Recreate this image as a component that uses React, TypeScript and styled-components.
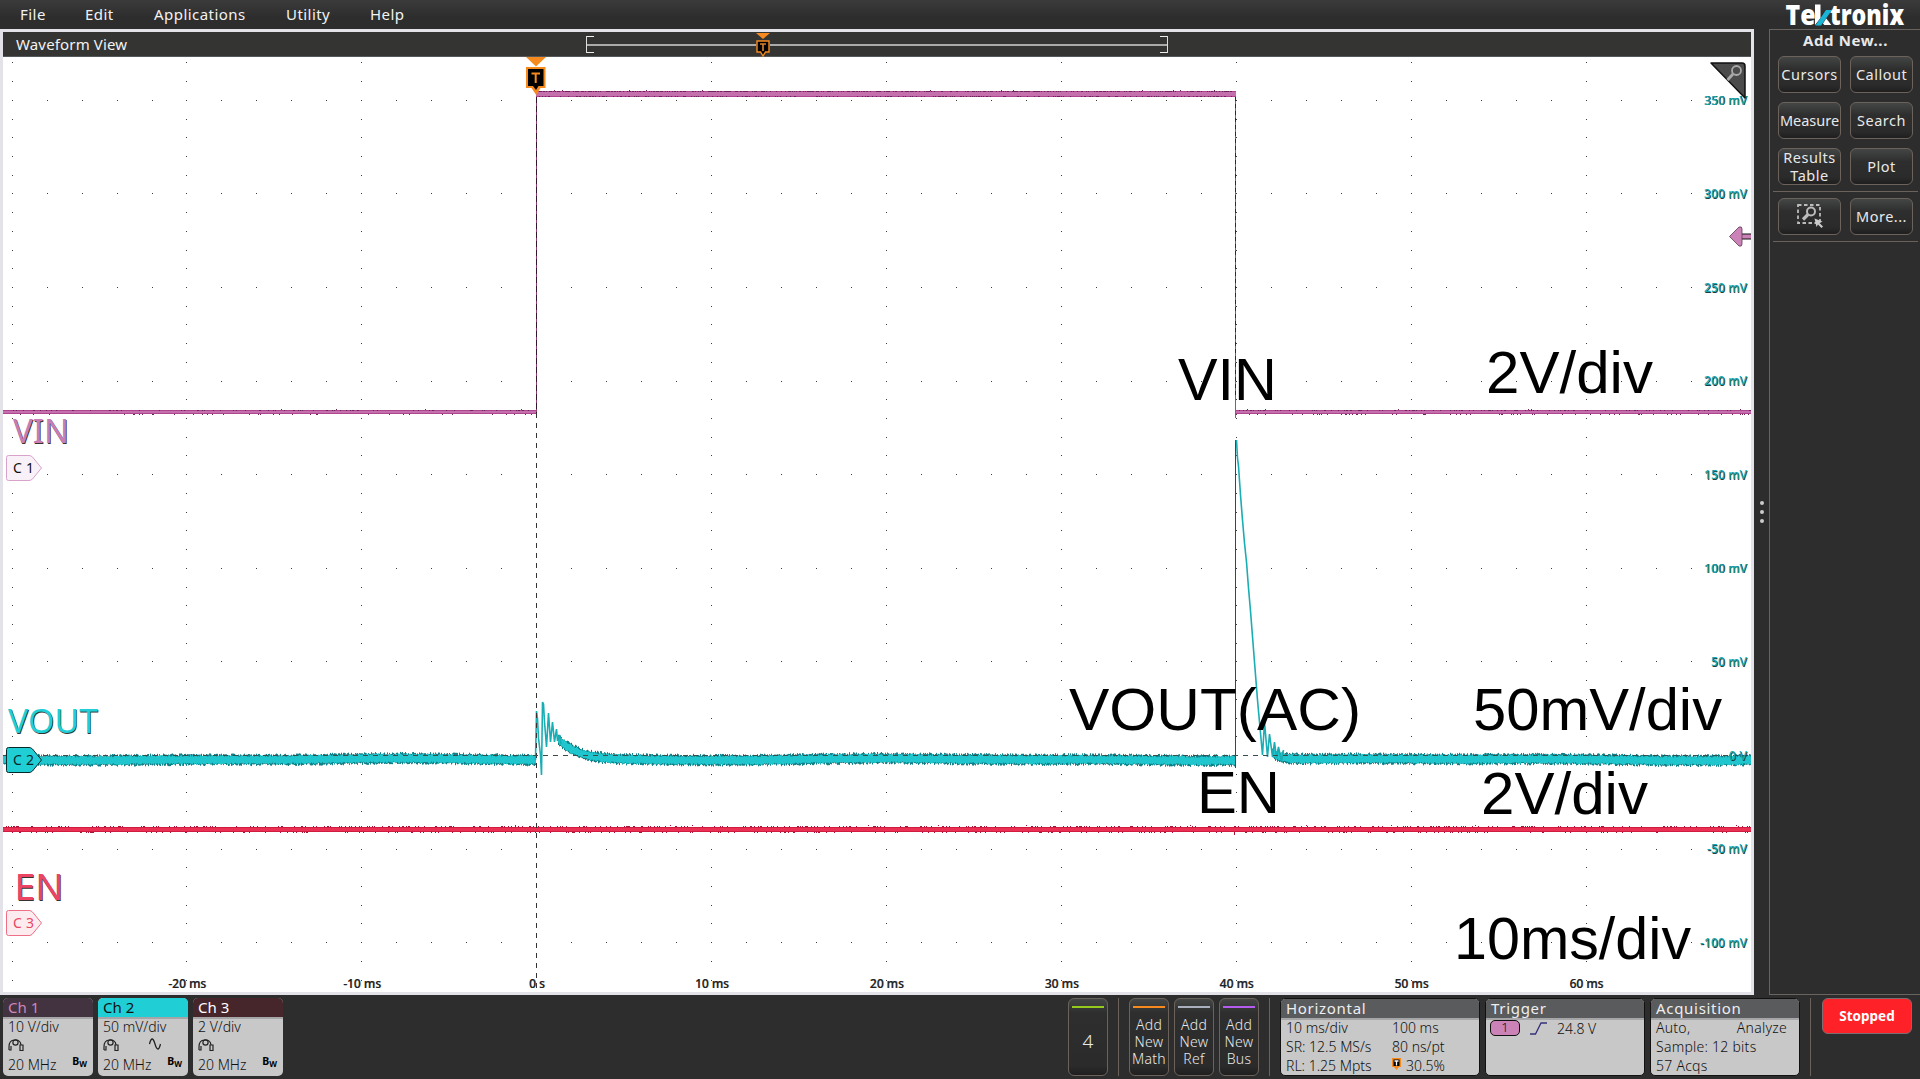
import type { ReactNode } from "react";
import styled, { createGlobalStyle } from "styled-components";

const UI_FONT = `"Noto Sans", "Open Sans", sans-serif`;

// small deterministic noise source, keeps the traces stable between renders
const createNoise = (seed: number) => () => {
  seed = (seed * 1664525 + 1013904223) % 4294967296;
  return seed / 4294967296;
};

const ORIGIN_X = 536.3;
const ORIGIN_Y = 755;
const DIV_X = 174.9;
const DIV_Y = 93.6;
const PLOT_LEFT = 3;
const PLOT_RIGHT = 1751;

const gridDots = () => {
  let d = "";
  for (let col = -3; col <= 6; col++) {
    if (col === 0) continue;
    const x = Math.round(ORIGIN_X + col * DIV_X);
    for (let k = -37; k <= 12; k++) {
      const y = Math.round(ORIGIN_Y + (k * DIV_Y) / 5);
      if (k !== 0) d += `M${x} ${y}h1v1h-1z`;
    }
  }
  for (let row = -7; row <= 2; row++) {
    if (row === 0) continue;
    const y = Math.round(ORIGIN_Y + row * DIV_Y);
    for (let k = -15; k <= 33; k++) {
      if (k % 5 === 0) continue;
      d += `M${Math.round(ORIGIN_X + (k * DIV_X) / 5)} ${y}h1v1h-1z`;
    }
  }
  return d;
};

const specks = (from: number, to: number, top: number, bottom: number, seed: number, density: number) => {
  const rand = createNoise(seed);
  let d = "";
  for (let x = from; x < to; x++) {
    if (rand() < density) d += `M${x} ${top}h1v1h-1z`;
    if (rand() < density * 0.6) d += `M${x} ${bottom}h1v1h-1z`;
    if (rand() < density * 0.04) d += `M${x} ${top - 1}h1v1h-1z`;
  }
  return d;
};

const center = (x: number) => {
  const wave = Math.sin(x / 83) * 0.8 + Math.sin(x / 37) * 0.4;
  let base = 759.5 + wave;
  if (x > 556 && x < 680) base -= 23 * Math.exp(-(x - 556) / 20);
  if (x > 1268 && x < 1320) base -= 10 * Math.exp(-(x - 1268) / 10);
  return base;
};

const band = (from: number, to: number, half: number, jitter: number, seed: number) => {
  const rand = createNoise(seed);
  let d = "";
  for (let x = from; x < to; x++) {
    const y = center(x);
    const top = y - half - rand() * jitter;
    const bottom = y + half + rand() * jitter;
    d += `M${x + 0.5} ${top.toFixed(1)}V${bottom.toFixed(1)}`;
  }
  return d;
};

const RING_START =
  "M535.5 760L536.5 711L537.5 719L538.5 738L540.5 755L541.5 775L542.5 702L543.5 704L544.5 722L546.5 747L548.5 713L550.5 742L552.5 722L554.5 742L556.5 729L557.5 741L559.5 735L561 744";
const RING_END =
  "M1236.5 440L1237.5 458L1238.5 466L1240.5 495L1242.5 520L1244.5 543L1246.5 562L1248.5 588L1250.5 611L1254.5 662L1257.500 700L1260.500 733L1262.500 755L1264.500 722L1267.500 757L1269.500 734L1272.500 757L1274.500 742L1276.500 758L1278.500 747L1281.500 761L1283.500 750";

const VOLT_LABELS = ["350 mV", "300 mV", "250 mV", "200 mV", "150 mV", "100 mV", "50 mV", "0 V", "-50 mV", "-100 mV"];
const VOLT_WIDTHS = [43, 43, 43, 43, 43, 43, 36, 18, 40, 47];
const TIME_LABELS = ["-20 ms", "-10 ms", "0 s", "10 ms", "20 ms", "30 ms", "40 ms", "50 ms", "60 ms"];

const NOTES = [
  { text: "VIN", x: 1178, y: 399.5, width: 99 },
  { text: "2V/div", x: 1486, y: 393, width: 167 },
  { text: "VOUT(AC)", x: 1069, y: 730, width: 292 },
  { text: "50mV/div", x: 1473, y: 730, width: 249 },
  { text: "EN", x: 1197, y: 813, width: 83 },
  { text: "2V/div", x: 1481, y: 813.5, width: 167 },
  { text: "10ms/div", x: 1454, y: 959, width: 237 },
];

const CHANNEL_NAMES = [
  { text: "VIN", x: 13, y: 443, size: 33, width: 56, color: "#c77eb4" },
  { text: "VOUT", x: 8, y: 733, size: 33, width: 90, color: "#20cfd6" },
  { text: "EN", x: 14.5, y: 899.5, size: 36, width: 49, color: "#ec4463" },
];

const TAGS = [
  { label: "C 1", y: 455.5, fill: "#f8f1f7", stroke: "#d9a2cb", text: "#111" },
  { label: "C 2", y: 747.5, fill: "#20cfd6", stroke: "#06282a", text: "#06282a" },
  { label: "C 3", y: 910.5, fill: "#fdecef", stroke: "#ee6f86", text: "#ec4463" },
];

function Plot() {
  return (
    <PlotSvg viewBox="3 57 1748 935">
      <path d={gridDots()} fill="#3c3c3c" shapeRendering="crispEdges" />

      <g shapeRendering="crispEdges">
        <path d="M3 410h533v4H3zM1236 410h515v4h-515zM536 91h700v6H536z" fill="#b0458f" />
        <path d="M3 411h533v2H3zM1236 411h515v2h-515zM536 92h700v4H536z" fill="#c470ac" />
        <path
          d={specks(3, 536, 410, 414, 3, 0.13) + specks(1236, PLOT_RIGHT, 410, 414, 8, 0.2) + specks(536, 1236, 91, 96, 12, 0.5)}
          fill="#6a2458"
        />
        <path d="M536.500 97v317" stroke="#8a3d75" />
        <path d="M536.500 97v317" stroke="#33182c" strokeDasharray="6 3" />
        <path d="M1235.500 97v321" stroke="#a34a8b" />
        <path d="M1235.500 97v300" stroke="#4a183c" strokeDasharray="4 3" />
      </g>

      <path d={band(PLOT_LEFT, 536, 3.8, 2.6, 21) + band(558, 1236, 3.8, 2.6, 5) + band(1272, PLOT_RIGHT, 3.8, 2.6, 9)} stroke="#127f86" fill="none" />
      <path d={band(PLOT_LEFT, 536, 3, 1.8, 14) + band(558, 1236, 3, 1.8, 33) + band(1272, PLOT_RIGHT, 3, 1.8, 2)} stroke="#1fc6cd" fill="none" />
      <path d={RING_START} stroke="#19adb4" strokeWidth="1.6" fill="none" />
      <path d="M1235.500 440V768" stroke="#0c5a60" shapeRendering="crispEdges" />
      <path d={RING_END} stroke="#19adb4" strokeWidth="1.6" fill="none" />

      <g shapeRendering="crispEdges">
        <path d="M3 827h1748v5H3z" fill="#d01c40" />
        <path d="M3 828h1748v3H3z" fill="#ea3153" />
        <path d={specks(3, PLOT_RIGHT, 826, 832, 44, 0.22)} fill="#a01634" />
        <path d="M1234 832h1v3h-1z" fill="#a01634" />
        <path d="M536.500 413V992" stroke="#333" strokeDasharray="5 5" />
        <path d="M3 755.500H1751" stroke="#3d4a4a" strokeDasharray="5 5" />
      </g>

      {VOLT_LABELS.map((label, i) => {
        const y = 104.5 + i * DIV_Y;
        return (
          <g key={label}>
            <AxisText x={1747.7} y={y + 0.8} textLength={VOLT_WIDTHS[i]} $color="#1c3f42" $anchor="end">
              {label}
            </AxisText>
            <AxisText x={1747} y={y} textLength={VOLT_WIDTHS[i]} $color="#16a6af" $anchor="end">
              {label}
            </AxisText>
          </g>
        );
      })}
      {TIME_LABELS.map((label, i) => (
        <g key={label}>
          <AxisText x={187.7 + i * DIV_X} y={988} $color="#777" $anchor="middle">
            {label}
          </AxisText>
          <AxisText x={187.2 + i * DIV_X} y={987.5} $color="#222" $anchor="middle">
            {label}
          </AxisText>
        </g>
      ))}

      {CHANNEL_NAMES.map(({ text, x, y, size, width, color }) => (
        <g key={text}>
          <ChannelText x={x + 0.7} y={y + 1} textLength={width} lengthAdjust="spacingAndGlyphs" $size={size} $color="#333">
            {text}
          </ChannelText>
          <ChannelText x={x} y={y} textLength={width} lengthAdjust="spacingAndGlyphs" $size={size} $color={color}>
            {text}
          </ChannelText>
        </g>
      ))}
      {TAGS.map(({ label, y, fill, stroke, text }) => (
        <g key={label}>
          <path d={`M8.5 ${y}H29Q31 ${y} 32.5 ${y + 1.5}L41.5 ${y + 12.5}L32.5 ${y + 23.5}Q31 ${y + 25} 29 ${y + 25}H8.5Q6.5 ${y + 25} 6.5 ${y + 23}V${y + 2}Q6.5 ${y} 8.5 ${y}z`} fill={fill} stroke={stroke} />
          <TagText x={13} y={y + 17.5} textLength={21} $color={text}>
            {label}
          </TagText>
        </g>
      ))}

      <path d="M526 57h20l-10 9.5z" fill="#f68a1f" />
      <path d="M526 67h19.500v21h-5l-4.300 7l-4.700-7H526z" fill="#f68a1f" />
      <path d="M528 69h15.500v17h-5l-2.500 4l-3-4h-5z" fill="#000" />
      <path d="M531.500 73.500h8.500M535.700 73.500v9.500" stroke="#f68a1f" strokeWidth="2" />

      <path d="M1711 63h31q3 0 3 3v32z" fill="#4b4b4b" stroke="#111" strokeWidth="1.500" strokeLinejoin="round" />
      <circle cx="1736.500" cy="70.500" r="4.500" fill="none" stroke="#a9a9a9" strokeWidth="1.800" />
      <path d="M1733 74l-5.500 6" stroke="#a9a9a9" strokeWidth="2.800" />
      <path d="M1742 234h9v5h-9z" fill="#cb82b6" />
      <path d="M1742 234h9M1742 239h9" stroke="#111" strokeWidth="1.200" />
      <path d="M1729.500 236.500L1739 227q3-1 3 2v15q0 3-3 2z" fill="#cb82b6" stroke="#5d3a53" strokeWidth=".8" />

      {NOTES.map(({ text, x, y, width }, i) => (
        <NoteText key={i} x={x} y={y} textLength={width} lengthAdjust="spacingAndGlyphs">
          {text}
        </NoteText>
      ))}
    </PlotSvg>
  );
}

const CHANNELS = [
  { name: "Ch 1", scale: "10 V/div", head: "#43323f", color: "#cf86bb", ac: false },
  { name: "Ch 2", scale: "50 mV/div", head: "#20cfd6", color: "#111", ac: true },
  { name: "Ch 3", scale: "2 V/div", head: "#47262b", color: "#fff", ac: false },
];

function ProbeIcon() {
  return (
    <svg width="16" height="14" viewBox="0 0 16 14" fill="none" stroke="#222" strokeWidth="1.200">
      <path d="M1 12V9Q1 2 6.500 2h1Q12.500 2 13 7" />
      <path d="M1 12h2V8" />
      <circle cx="7.500" cy="4.500" r="2.600" />
      <path d="M12 7h3v5.500h-3z" />
    </svg>
  );
}

function NavTriggerIcon() {
  return (
    <svg width="14" height="24" viewBox="0 0 14 24">
      <path d="M0 0h14l-7 6z" fill="#f68a1f" />
      <path d="M1 8h12v11h-3.500l-2.500 4l-2.500-4H1z" fill="#000" stroke="#f68a1f" strokeWidth="1.400" />
      <path d="M4 11h6M7 11v7" stroke="#d9822f" strokeWidth="1.600" />
    </svg>
  );
}

function Panel({ title, width, children }: { title: string; width: number; children: ReactNode }) {
  return (
    <Badge $width={width} $dark>
      <BadgeHead $bg="#5a5b5d" $color="#eee" $spacing={0.7}>
        {title}
      </BadgeHead>
      <BadgeBody>{children}</BadgeBody>
    </Badge>
  );
}

export default function App() {
  return (
    <Screen>
      <GlobalStyle />
      <MenuBar>
        <Menu>
          <MenuItem $width={65}>File</MenuItem>
          <MenuItem $width={69}>Edit</MenuItem>
          <MenuItem $width={132}>Applications</MenuItem>
          <MenuItem $width={84}>Utility</MenuItem>
          <MenuItem $width={60}>Help</MenuItem>
        </Menu>
        <Logo>
          <svg width="130" height="29" viewBox="0 0 130 29" overflow="visible">
            <LogoText x="1.500" y="25" textLength="30" lengthAdjust="spacingAndGlyphs">
              Te
            </LogoText>
            <LogoText x="46" y="25" textLength="74" lengthAdjust="spacingAndGlyphs">
              tronix
            </LogoText>
            <path d="M31 4.500h5.500V18l-5.500 7z" fill="#fff" />
            <path d="M31.500 25.500L42 10h6L37 25.500z" fill="#19b5d8" />
            <path d="M39 23.500l3.300-5l5 6.500h-7z" fill="#fff" />
          </svg>
        </Logo>
      </MenuBar>

      <Main>
        <WaveWindow>
          <WaveHeader>
            <WaveTitle>Waveform View</WaveTitle>
            <NavBar>
              <NavLine $width={169} />
              <NavTriggerIcon />
              <NavLine $grow />
            </NavBar>
          </WaveHeader>
          <Plot />
        </WaveWindow>
        <Splitter>
          <Dot />
          <Dot />
          <Dot />
        </Splitter>
        <SidePanel>
          <SideTitle>Add New...</SideTitle>
          <ButtonGrid>
            <SideButton>Cursors</SideButton>
            <SideButton>Callout</SideButton>
            <SideButton $tight>Measure</SideButton>
            <SideButton>Search</SideButton>
            <SideButton>
              Results
              <br />
              Table
            </SideButton>
            <SideButton>Plot</SideButton>
          </ButtonGrid>
          <Rule />
          <ButtonGrid>
            <SideButton>
              <svg width="28" height="26" viewBox="0 0 28 26" fill="none" stroke="#bbb">
                <path d="M2 2h22v18H2z" strokeWidth="1.800" strokeDasharray="3.500 2.500" />
                <circle cx="15" cy="8.500" r="4" strokeWidth="2" fill="#2d2d2d" />
                <path d="M12 11.500l-5 5" strokeWidth="3.200" />
                <path d="M18.500 15.500l8 3l-3 1.500l3.500 3.500l-1.500 1.500l-3.500-3.500l-1.500 2.500z" fill="#ccc" stroke="none" />
              </svg>
            </SideButton>
            <SideButton>More...</SideButton>
          </ButtonGrid>
          <Rule />
        </SidePanel>
      </Main>

      <Footer>
        <Group $gap={5}>
          {CHANNELS.map(({ name, scale, head, color, ac }) => (
            <Badge key={name} $width={90}>
              <BadgeHead $bg={head} $color={color}>
                {name}
              </BadgeHead>
              <BadgeBody>
                <Line $tight>{scale}</Line>
                <IconLine>
                  <ProbeIcon />
                  {ac && (
                    <svg width="12" height="12" viewBox="0 0 12 12" fill="none" stroke="#222" strokeWidth="1.300">
                      <path d="M.5 6Q3-4 6 6T11.500 6" />
                    </svg>
                  )}
                </IconLine>
                <Line $tight>
                  20 MHz
                  <Bandwidth>
                    B<small>W</small>
                  </Bandwidth>
                </Line>
              </BadgeBody>
            </Badge>
          ))}
        </Group>
        <Group $gap={5}>
          <AddButton $accent="#94cb1c" $big>
            4
          </AddButton>
          <Divider />
          <AddButton $accent="#f68a1f">Add New Math</AddButton>
          <AddButton $accent="#a9afbd">Add New Ref</AddButton>
          <AddButton $accent="#b45cf0">Add New Bus</AddButton>
          <Divider />
          <Panel title="Horizontal" width={200}>
            <Columns>
              <span>10 ms/div</span>
              <span>100 ms</span>
              <span>SR: 12.5 MS/s</span>
              <span>80 ns/pt</span>
              <span>RL: 1.25 Mpts</span>
              <span>
                <svg width="14" height="13" viewBox="0 0 14 13">
                  <path d="M0 0h9v9H7l-2.500 3L2 9H0z" fill="#f68a1f" />
                  <path d="M1.500 1.500h6v6.500h-6z" fill="#000" />
                  <path d="M2.500 3h4M4.500 3v4.500" stroke="#fff" strokeWidth="1.300" />
                </svg>
                30.5%
              </span>
            </Columns>
          </Panel>
          <Panel title="Trigger" width={160}>
            <TriggerLine>
              <SourceChip>1</SourceChip>
              <svg width="17" height="13" viewBox="0 0 17 13" fill="none" stroke="#33307a" strokeWidth="1.300">
                <path d="M0 12h5.500L11 1h6" />
              </svg>
              <span>24.8 V</span>
            </TriggerLine>
          </Panel>
          <Panel title="Acquisition" width={150}>
            <Line $split>
              <span>Auto,</span>
              <span>Analyze</span>
            </Line>
            <Line>Sample: 12 bits</Line>
            <Line>57 Acqs</Line>
          </Panel>
          <Divider />
          <StopButton>Stopped</StopButton>
        </Group>
      </Footer>
    </Screen>
  );
}

const GlobalStyle = createGlobalStyle`
  * {
    box-sizing: border-box;
  }

  body {
    margin: 0;
    background-color: #2d2d2d;
  }
`;

const Screen = styled.div`
  width: 1920px;
  height: 1079px;
  display: flex;
  flex-direction: column;
  overflow: hidden;
  background-color: #2d2d2d;
  font-family: ${UI_FONT};
`;

const MenuBar = styled.header`
  height: 29px;
  display: flex;
  justify-content: space-between;
  background: linear-gradient(#3b3b3b, #2d2d2d 60%);
`;

const Menu = styled.nav`
  display: flex;
  padding-left: 20px;
`;

const MenuItem = styled.span<{ $width: number }>`
  width: ${({ $width }) => $width}px;
  color: #f2f2f2;
  font-size: 15px;
  line-height: 28px;
  letter-spacing: 0.45px;
`;

const Logo = styled.div`
  width: 136px;
`;

const LogoText = styled.text`
  fill: #fff;
  font-family: "Open Sans", sans-serif;
  font-size: 28px;
  font-weight: 800;
`;

const Main = styled.main`
  height: 966px;
  display: flex;
`;

const WaveWindow = styled.section`
  width: 1754px;
  border: 3px solid #e2e2e8;
  background-color: #fff;
`;

const WaveHeader = styled.div`
  height: 25px;
  display: flex;
  background-color: #343432;
  border-bottom: 1px solid #55585a;
`;

const WaveTitle = styled.div`
  width: 583px;
  padding-left: 13px;
  color: #f2f2f2;
  font-size: 15px;
  line-height: 25px;
  letter-spacing: 0.15px;
`;

const NavBar = styled.div`
  width: 582px;
  height: 17px;
  margin-top: 4px;
  display: flex;
  align-items: center;
  background: linear-gradient(#eee, #eee) 0 0 / 7px 1px no-repeat, linear-gradient(#eee, #eee) 0 100% / 7px 1px no-repeat,
    linear-gradient(#eee, #eee) 100% 0 / 7px 1px no-repeat, linear-gradient(#eee, #eee) 100% 100% / 7px 1px no-repeat;
  border-left: 1px solid #ddd;
  border-right: 1px solid #ddd;

  svg {
    flex: none;
  }
`;

const NavLine = styled.div<{ $width?: number; $grow?: boolean }>`
  ${({ $width, $grow }) => ($grow ? "flex: 1;" : `width: ${$width}px;`)}
  height: 2px;
  background-color: #aaa;
`;

const PlotSvg = styled.svg`
  display: block;
  width: 1748px;
  height: 935px;
`;

const AxisText = styled.text<{ $color: string; $anchor: string }>`
  fill: ${({ $color }) => $color};
  text-anchor: ${({ $anchor }) => $anchor};
  font-family: ${UI_FONT};
  font-size: 12px;
  font-weight: 500;
`;

const ChannelText = styled.text<{ $size: number; $color: string }>`
  fill: ${({ $color }) => $color};
  font-family: ${UI_FONT};
  font-size: ${({ $size }) => $size}px;
`;

const TagText = styled.text<{ $color: string }>`
  fill: ${({ $color }) => $color};
  font-family: ${UI_FONT};
  font-size: 14px;
`;

const NoteText = styled.text`
  fill: #000;
  font-family: "Liberation Sans", sans-serif;
  font-size: 60px;
`;

const Splitter = styled.div`
  width: 16px;
  display: flex;
  flex-direction: column;
  justify-content: center;
  align-items: center;
  gap: 5px;
`;

const Dot = styled.i`
  width: 4px;
  height: 4px;
  border-radius: 50%;
  background-color: #ccc;
`;

const SidePanel = styled.aside`
  flex: 1;
  padding: 0 2px 0 3px;
  border: 1px solid #6a6460;
  border-right: none;
`;

const SideTitle = styled.h2`
  height: 26px;
  margin: 0;
  color: #e8e8e8;
  font-size: 15px;
  line-height: 20px;
  letter-spacing: 0.6px;
  text-align: center;
`;

const ButtonGrid = styled.div`
  display: grid;
  grid-template-columns: 63px 63px;
  gap: 9px;
  padding: 0 5px;
`;

const SideButton = styled.button<{ $tight?: boolean }>`
  height: 37px;
  padding: 0 0 2px;
  display: flex;
  justify-content: center;
  align-items: center;
  border: 1px solid #6c625c;
  border-radius: 6px;
  background: linear-gradient(#444646, #2e2e2e 35%, #2b2b2b 80%, #1f1f1f);
  color: #e8e8e8;
  font-family: inherit;
  font-size: 14.5px;
  line-height: 18px;
  letter-spacing: ${({ $tight }) => ($tight ? 0 : 0.5)}px;
`;

const Rule = styled.div`
  height: 1px;
  margin: 6px 0;
  background-color: #6c625c;
`;

const Footer = styled.footer`
  height: 84px;
  padding: 3px 8px 0 3px;
  display: flex;
  justify-content: space-between;
`;

const Group = styled.div<{ $gap: number }>`
  display: flex;
  gap: ${({ $gap }) => $gap}px;
`;

const Badge = styled.div<{ $width: number; $dark?: boolean }>`
  width: ${({ $width }) => $width}px;
  height: 78px;
  overflow: hidden;
  border: ${({ $dark }) => ($dark ? "1px solid #111" : "none")};
  border-radius: 5px;
  background-color: #c8c8c8;
`;

const BadgeHead = styled.div<{ $bg: string; $color: string; $spacing?: number }>`
  height: 19px;
  padding-left: 5px;
  background-color: ${({ $bg }) => $bg};
  color: ${({ $color }) => $color};
  font-size: 15px;
  line-height: 18px;
  letter-spacing: ${({ $spacing }) => $spacing ?? 0}px;
`;

const BadgeBody = styled.div`
  height: 59px;
  padding-left: 5px;
  border-top: 2px solid #a6a6a8;
  color: #111;
  font-size: 14px;
  font-weight: 300;
`;

const Line = styled.div<{ $tight?: boolean; $split?: boolean }>`
  height: 19px;
  display: flex;
  justify-content: ${({ $tight, $split }) => ($tight || $split ? "space-between" : "flex-start")};
  padding-right: ${({ $split }) => ($split ? 12 : 6)}px;
  line-height: 15px;
  letter-spacing: ${({ $tight }) => ($tight ? 0 : 0.25)}px;
  white-space: nowrap;
`;

const IconLine = styled.div`
  height: 19px;
  padding: 0 27px 0 0;
  display: flex;
  justify-content: space-between;
`;

const Bandwidth = styled.b`
  color: #000;
  font-size: 10.5px;
  font-weight: 700;
  line-height: 9px;

  small {
    position: relative;
    top: 2px;
    font-size: 8px;
  }
`;

const Columns = styled.div`
  display: grid;
  grid-template-columns: 106px 1fr;
  grid-auto-rows: 19px;
  line-height: 15px;
  white-space: nowrap;
`;

const TriggerLine = styled.div`
  display: flex;
  align-items: center;
  gap: 10px;
  line-height: 15px;
`;

const SourceChip = styled.span`
  width: 30px;
  height: 16px;
  margin-left: -1px;
  border: 1px solid #111;
  border-radius: 5px;
  background-color: #cb82b6;
  font-size: 13px;
  line-height: 13px;
  text-align: center;
`;

const AddButton = styled.button<{ $accent: string; $big?: boolean }>`
  width: 40px;
  height: 78px;
  padding: ${({ $big }) => ($big ? "9px 0 0" : "9px 0 0")};
  border: 1px solid #6c625c;
  border-radius: 6px;
  background: linear-gradient(${({ $accent }) => `${$accent}, ${$accent}`}) 50% 7px / 32px 2px no-repeat,
    linear-gradient(#444646, #2e2e2e 18%, #2b2b2b 88%, #1f1f1f);
  color: #e8e8e8;
  font-family: inherit;
  font-size: ${({ $big }) => ($big ? 19 : 14)}px;
  font-weight: 300;
  line-height: 17px;
  letter-spacing: 0.3px;
`;

const Divider = styled.div`
  width: 1px;
  height: 78px;
  margin: 0 5px;
  background-color: #6c625c;

  &:nth-last-child(2) {
    margin-right: 6px;
  }
`;

const StopButton = styled.button`
  width: 90px;
  height: 36px;
  padding: 0 0 1px;
  border: 1px solid #7c6d70;
  border-radius: 6px;
  background-color: #ff2128;
  color: #fff;
  font-family: inherit;
  font-size: 13.5px;
  font-weight: 700;
`;
